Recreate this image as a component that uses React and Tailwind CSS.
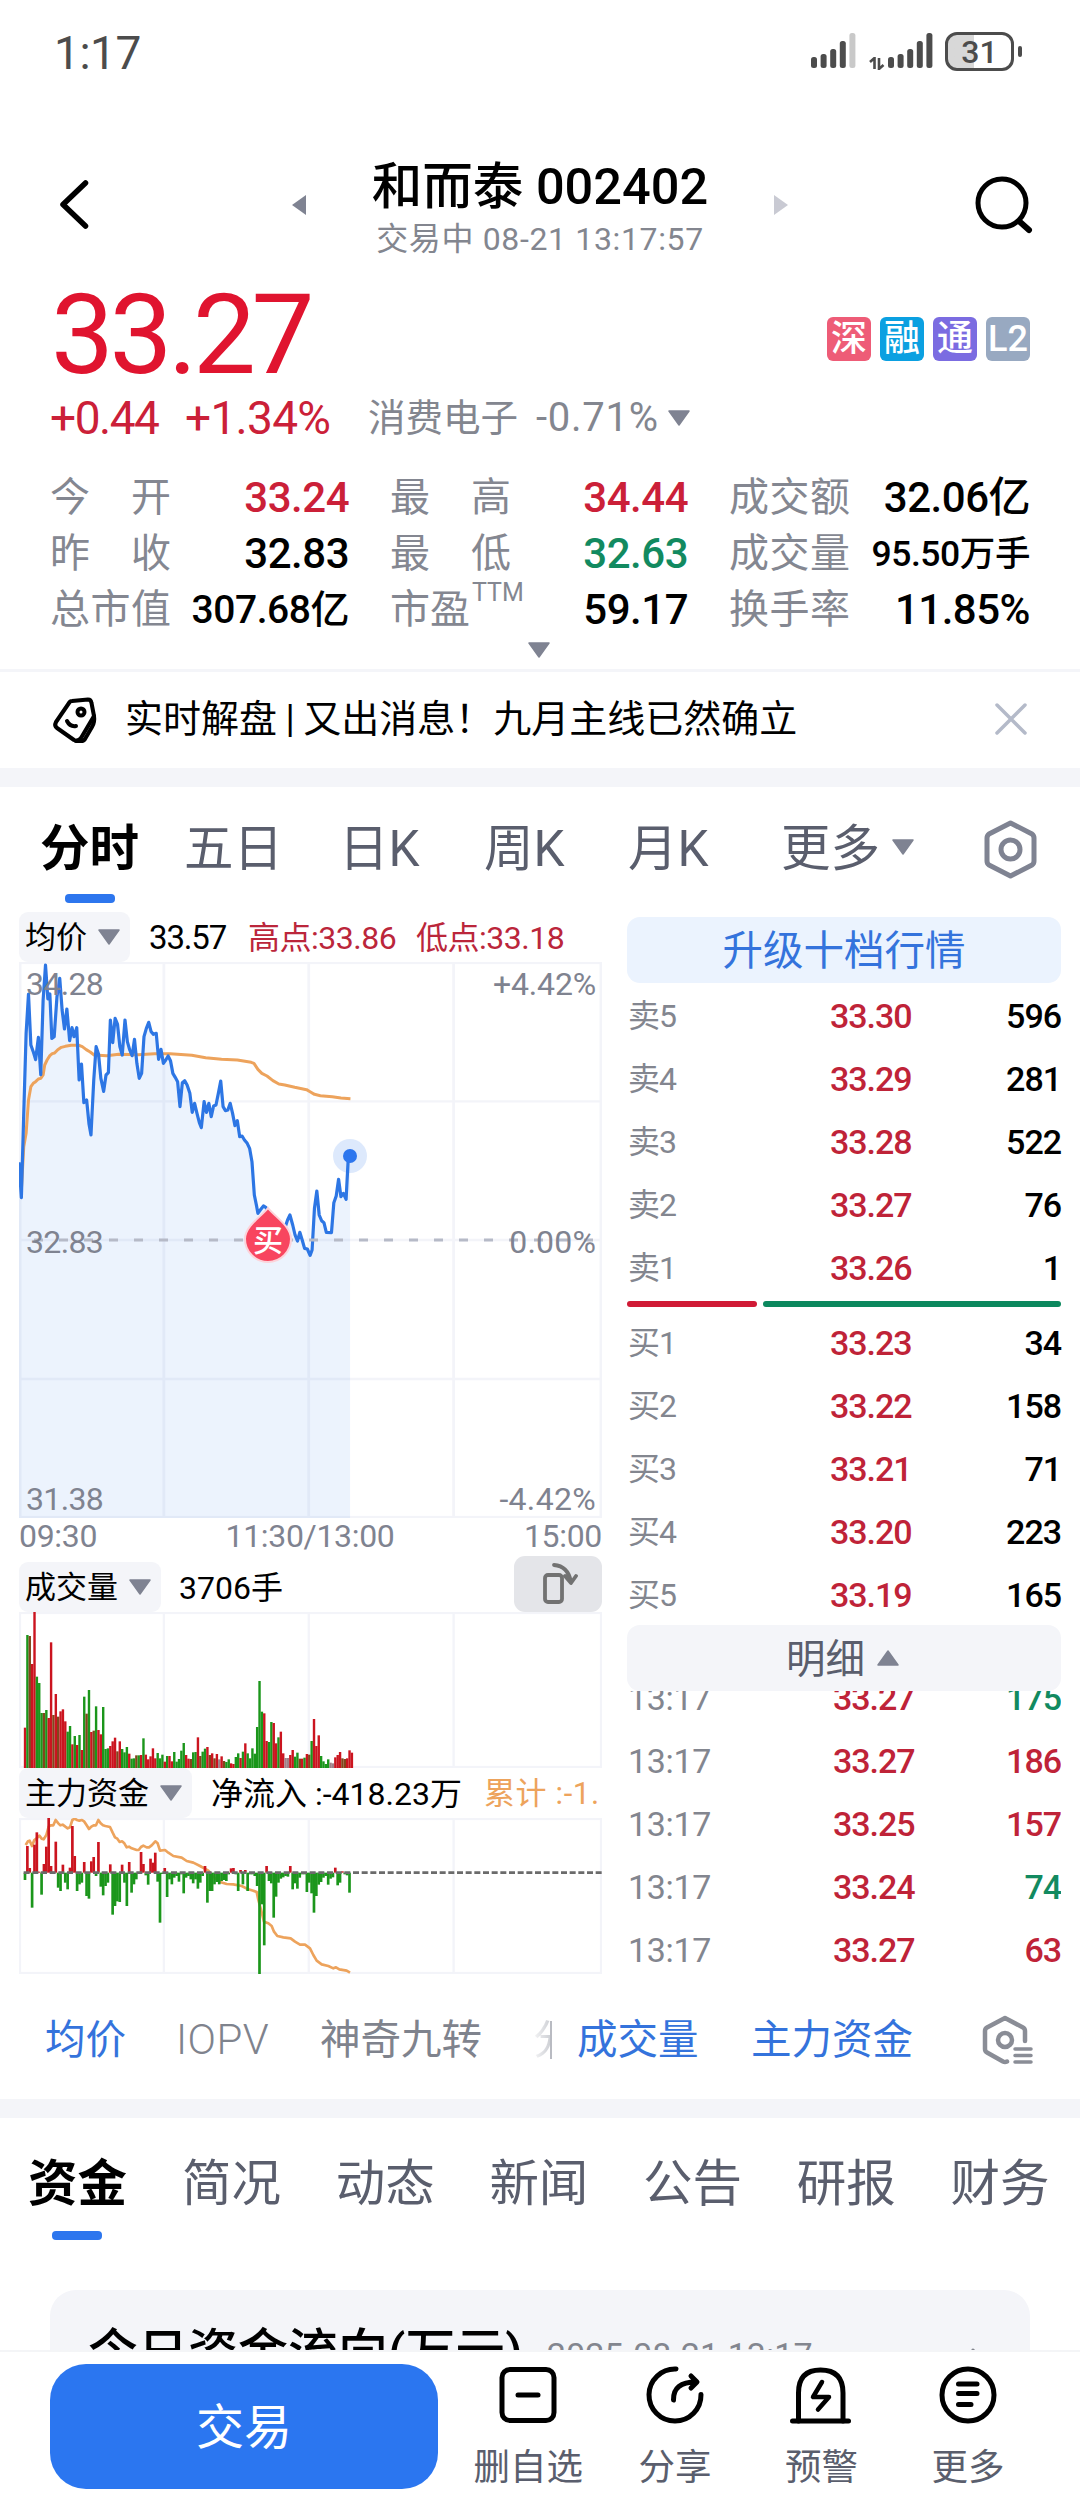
import clsx from 'clsx'

const PRICE_LINE =
  '48,787 54,893 60,640 66,400 72,282 78,435 84,455 90,479 97,412 103,524 109,300 115,195 121,297 126,282 131,415 137,410 144,290 151,235 157,330 163,387 169,327 176,422 182,383 187,410 194,383 200,540 206,492 212,608 219,600 225,672 230,705 237,540 243,440 249,462 255,535 262,574 268,525 274,518 279,360 285,428 291,355 297,372 303,440 309,465 316,360 322,425 328,450 334,467 340,418 346,490 352,535 358,520 364,410 370,385 376,367 382,395 388,403 395,400 401,478 407,448 413,490 419,480 425,468 431,482 437,520 443,532 449,545 455,620 461,548 467,542 473,555 480,580 486,637 492,610 498,640 504,668 509,683 516,605 522,637 528,610 534,650 540,618 546,615 552,580 558,543 564,620 570,632 576,630 582,610 588,640 594,677 600,662 606,710 612,708 618,720 625,730 631,745 637,785 643,885 649,920 652,940 658,930 666,918 672,922 680,940 700,990 720,985 727,960 733,945 740,975 746,1005 752,1023 758,997 764,1020 770,1045 777,1047 784,1066 789,1050 795,925 801,873 807,945 813,962 819,968 825,997 838,998 844,908 850,888 856,838 862,890 868,880 875,898 880,785 885,768'

const AVG_LINE =
  '54,870 60,740 66,700 72,600 78,560 84,550 90,545 97,537 103,535 109,525 113,495 119,480 126,467 132,461 138,459 146,449 155,442 165,439 180,436 200,436 208,440 218,449 228,456 238,465 270,467 300,463 350,464 390,461 430,461 485,466 520,473 560,478 600,480 635,487 642,490 652,508 662,520 675,528 690,542 705,552 720,555 745,562 775,569 785,576 795,583 810,587 840,590 862,594 886,596'

const FLOW_LINE =
  '77,735 84,724 89,722 96,738 103,720 110,715 118,707 125,716 131,718 139,705 146,680 152,676 160,676 167,660 175,670 181,676 188,674 196,680 203,685 210,682 217,660 224,656 231,660 238,662 246,660 253,665 260,676 267,687 274,680 281,676 288,676 295,660 302,670 309,676 316,678 330,681 338,698 345,712 352,716 359,726 366,724 373,730 380,742 387,740 395,745 410,750 416,750 423,741 430,737 440,742 447,742 455,736 466,724 473,730 480,752 495,750 505,758 520,768 545,773 560,783 580,788 600,798 625,812 640,830 660,846 680,852 700,853 725,858 745,868 760,872 770,876 775,900 782,925 792,965 805,970 815,978 822,995 832,1008 850,1012 872,1015 885,1025 900,1034 915,1034 930,1045 940,1065 950,1082 965,1093 985,1098 1000,1105 1008,1102 1018,1108 1040,1112 1050,1118'

// r = up, g = down, b = blended up/down, n = flat
const VOLUMES =
  'r121 g399 b396 r312 r468 g274 g255 g165 b165 g174 r150 r377 b159 r222 b154 r170 r176 r140 g109 g126 r71 g96 r69 g99 r54 g214 b163 g234 r108 b112 g185 r114 r101 g183 g57 g59 r66 r80 r91 b50 r80 g57 g47 g63 r43 g28 g29 b38 g38 r39 g89 r40 r26 r35 r59 r29 g45 g29 g40 r19 g36 r36 r20 g48 g19 g27 g52 g75 r39 r28 b27 g47 g48 r92 b36 g49 g58 r63 b39 r44 b29 r42 n26 r35 b21 g18 g26 r14 r12 g33 g44 r30 g49 r74 g44 g29 g59 g43 g123 g261 g169 r164 r81 g78 g138 r135 r74 g92 r109 r44 n30 n30 r39 r54 g34 g46 b28 r28 g31 r42 b40 g81 r147 r66 r98 g36 g20 g12 g26 n16 n14 r32 r39 r48 b29 b27 r29 r53 r46'.split(' ')

const FLOWS = [
  -22, 80, 14, -105, 84, 121, 3, -66, 26, 78, 164, 20, 3, 93, -45, -55, 24, -30, -50, 15, 140, 50, -55, -35, -30, 32,
  -70, -78, 34, 47, -10, 92, -42, -68, -40, -30, 25, -126, -100, -86, -88, 24, -30, -100, 32, -60, -35, -20, -3, 62,
  26, -8, -36, 42, 30, 60, -27, -150, -4, 14, -73, -20, -35, -15, -10, -27, -5, -62, -15, -10, -20, -32, -20, -48,
  -30, -10, 20, -90, -55, -55, -35, -28, -35, -25, -22, -25, -5, 13, 14, -5, -55, 8, -35, 8, -55, -5, -5, -10, -40,
  -304, -95, -218, 20, -25, -32, -135, -72, -30, -18, -14, -10, -12, 20, -50, -32, -48, -15, -5, -5, -58, -30, -62,
  -120, -70, -36, -28, -15, -10, -36, -18, -14, 15, -38, -30, 4, -5, -8, -60,
]

const BAR_STEP = 7.106
const BAR_COLORS = { r: '#cb141f', g: '#1b961b', b: '#82461c', n: '#a08088' }

const STATS = [
  { label: '今开', value: '33.24', tone: 'text-[#cb2038]' },
  { label: '最高', value: '34.44', tone: 'text-[#cb2038]' },
  { label: '成交额', value: '32.06亿' },
  { label: '昨收', value: '32.83' },
  { label: '最低', value: '32.63', tone: 'text-[#128a60]' },
  { label: '成交量', value: '95.50万手', size: 'text-[35.5px]' },
  { label: '总市值', value: '307.68亿', size: 'text-[39px]' },
  { label: '市盈', sup: 'TTM', value: '59.17' },
  { label: '换手率', value: '11.85%' },
]

const BADGES = [
  ['深', 'bg-[#ee5c77]'],
  ['融', 'bg-[#0ba0e1]'],
  ['通', 'bg-[#7b6ce1]'],
  ['L2', 'bg-[#98a9c1]'],
]

const ASKS = [
  ['卖5', '33.30', '596'],
  ['卖4', '33.29', '281'],
  ['卖3', '33.28', '522'],
  ['卖2', '33.27', '76'],
  ['卖1', '33.26', '1'],
]

const BIDS = [
  ['买1', '33.23', '34'],
  ['买2', '33.22', '158'],
  ['买3', '33.21', '71'],
  ['买4', '33.20', '223'],
  ['买5', '33.19', '165'],
]

const TICKS = [
  ['13:17', '33.27', '175', 'down'],
  ['13:17', '33.27', '186', 'up'],
  ['13:17', '33.25', '157', 'up'],
  ['13:17', '33.24', '74', 'down'],
  ['13:17', '33.27', '63', 'up'],
]

function Triangle({ className = '', dir = 'down', fill = '#7f8392' }) {
  const points = {
    down: '1,1 21,1 11,15',
    up: '1,15 21,15 11,1',
  }
  return (
    <svg className={clsx('shrink-0', className)} width="22" height="16" viewBox="0 0 22 16">
      <polygon points={points[dir]} fill={fill} stroke={fill} strokeWidth="1.5" strokeLinejoin="round" />
    </svg>
  )
}

function SignalBars({ faded }) {
  const heights = [11, 14, 19, 27, 35]
  return (
    <svg width="45" height="36" viewBox="0 0 45 36">
      {heights.map((h, i) => (
        <rect
          key={i}
          x={i * 9.6}
          y={36 - h}
          width="6"
          height={h}
          rx="2.5"
          fill={faded && i === 4 ? '#c9c9c9' : '#4c4c4c'}
        />
      ))}
    </svg>
  )
}

function StatusBar() {
  return (
    <div className="flex h-[104px] items-start justify-between pl-[54px] pr-[58px] text-[#4c4c4c]">
      <span className="mt-[28px] text-[46px] leading-[50px] tracking-[-0.01em]">1:17</span>
      <div className="mt-[32px] flex items-start">
        <SignalBars faded />
        <svg className="ml-[13px] mt-[25px]" width="16" height="13" viewBox="0 0 16 13">
          <path d="M1 5 L5.5 1 V12 M10 1 V12 L14.500 8" fill="none" stroke="#4c4c4c" strokeWidth="2.6" />
        </svg>
        <span className="ml-[3px]">
          <SignalBars />
        </span>
        <div className="ml-[12px] flex h-[39px] w-[69px] items-center justify-center rounded-[12px] border-[3px] border-[#4c4c4c] bg-linear-to-r from-[#d8d8d8] from-42% to-white to-42% text-[32px] font-medium leading-none">
          31
        </div>
        <div className="ml-[4px] mt-[14px] h-[11px] w-[4px] rounded-full bg-[#4c4c4c]" />
      </div>
    </div>
  )
}

function Header() {
  return (
    <header className="flex h-[164px] items-start pl-[56px] pr-[45px]">
      <svg className="mt-[72px]" width="36" height="56" viewBox="0 0 36 56">
        <path d="M29.500 7 L7 28.500 L29.500 50" fill="none" stroke="#000" strokeWidth="5.500" strokeLinecap="round" strokeLinejoin="round" />
      </svg>
      <div className="ml-[199px] flex items-start">
        <svg className="mt-[90px]" width="16" height="22" viewBox="0 0 16 22">
          <polygon points="15,1 15,21 1,11" fill="#7f8392" />
        </svg>
        <div className="mt-[51px] flex w-[466px] flex-col items-center">
          <h1 className="text-[50.5px] font-medium leading-[64px] text-black">和而泰 002402</h1>
          <p className="-mt-px text-[32px] leading-[42px] tracking-[0.02em] text-[#83868f]">交易中 08-21 13:17:57</p>
        </div>
        <svg className="mt-[90px]" width="16" height="22" viewBox="0 0 16 22">
          <polygon points="1,1 1,21 15,11" fill="#c9cad3" />
        </svg>
      </div>
      <svg className="ml-auto mt-[70px]" width="62" height="62" viewBox="0 0 62 62">
        <circle cx="29" cy="29" r="24" fill="none" stroke="#000" strokeWidth="5" />
        <path d="M46.500 47.500 L56 56" stroke="#000" strokeWidth="6" strokeLinecap="round" />
      </svg>
    </header>
  )
}

function StatCell({ label, sup, value, tone = 'text-black', size = 'text-[42px]' }) {
  return (
    <div className="flex h-[56px] items-center justify-between">
      <div className={clsx('flex text-[40px] leading-[56px] text-[#848791]', !sup && 'w-[121px] justify-between')}>
        {label.split('').map((ch) => (
          <span key={ch}>{ch}</span>
        ))}
        {sup && <sup className="top-0 -mt-[17px] pl-[2px] text-[25px] leading-[56px]">{sup}</sup>}
      </div>
      <span className={clsx('font-medium leading-[56px] tracking-[-0.012em] whitespace-nowrap', size, tone)}>{value}</span>
    </div>
  )
}

function Quote() {
  return (
    <section className="h-[401px] pl-[50px] pr-[50px]">
      <div className="flex items-center justify-between pt-[27px]">
        <span className="pl-px text-[112px] leading-[80px] tracking-[-0.04em] text-[#e0142f]">33.27</span>
        <div className="flex gap-[9px] pt-[8px]">
          {BADGES.map(([text, bg]) => (
            <span
              key={text}
              className={clsx('flex h-[44px] w-[44px] items-center justify-center rounded-[6px] text-[36px] font-medium leading-none text-white', bg)}
            >
              {text}
            </span>
          ))}
        </div>
      </div>
      <div className="mt-[23px] flex h-[40px] items-center leading-[40px]">
        <span className="w-[135px] text-[46px] tracking-[-0.032em] text-[#cb2038]">+0.44</span>
        <span className="w-[183px] text-[46px] tracking-[-0.015em] text-[#cb2038]">+1.34%</span>
        <span className="w-[168px] text-[37.5px] text-[#83868f]">消费电子</span>
        <span className="w-[132px] text-[40px] tracking-[0.018em] text-[#83868f]">-0.71%</span>
        <Triangle />
      </div>
      <div className="mt-[32px] grid grid-cols-[299px_298px_301px] gap-x-[41px]">
        {STATS.map((s) => (
          <StatCell key={s.label} {...s} />
        ))}
      </div>
      <div className="flex justify-center pr-[2px] pt-[4px]">
        <Triangle />
      </div>
    </section>
  )
}

function Notice() {
  return (
    <div className="flex h-[99px] items-center border-t-[3px] border-[#f4f5f9] pl-[50px] pr-[52px]">
      <svg width="50" height="50" viewBox="0 0 50 50" fill="none" stroke="#000" strokeWidth="4" strokeLinejoin="round" strokeLinecap="round">
        <path d="M22 6 L38 4.500 Q41 4.500 41.500 8 L44 21 L31 43 Q28 47 24 45 L7 33 Q4 31 6 27 L19 8 Q20 6 22 6 Z" />
        <path d="M44 21 Q45 27 42 32 L35 44 Q34 46 31 46 L26 46" />
        <circle cx="31" cy="17" r="3.500" />
        <path d="M17 26 Q20 32 26 31" />
      </svg>
      <p className="ml-[25px] flex-1 pb-[3px] text-[38px] leading-[50px] text-black">
        实时解盘<span className="px-[8.5px]">|</span>又出消息！九月主线已然确立
      </p>
      <svg className="mb-[2px]" width="34" height="34" viewBox="0 0 34 34">
        <path d="M3 3 L31 31 M31 3 L3 31" stroke="#b4bac9" strokeWidth="3.500" strokeLinecap="round" />
      </svg>
    </div>
  )
}

function PeriodTabs() {
  return (
    <nav className="grid h-[125px] grid-cols-[144px_155px_145px_144px_153px_202px_auto] items-start pl-[40px] text-[49.5px] leading-[60px] text-[#5a5e6d]">
      <div className="flex flex-col pt-[32px]">
        <span className="font-bold text-black">分时</span>
        <span className="ml-[25px] mt-[15px] h-[9px] w-[50px] rounded-[4px] bg-[#2d76ee]" />
      </div>
      <span className="pt-[32px]">五日</span>
      <span className="pt-[32px]">日K</span>
      <span className="pt-[32px]">周K</span>
      <span className="pt-[32px]">月K</span>
      <span className="flex items-center gap-[12px] pt-[32px]">
        更多
        <Triangle className="mb-[4px]" />
      </span>
      <svg className="mt-[32px]" width="56" height="62" viewBox="0 0 56 62" fill="none" stroke="#7f8392" strokeWidth="5" strokeLinejoin="round">
        <path d="M27.500 4 L49 15 Q51 16.500 51 19 V42 Q51 44.500 49 46 L27.500 57 L6 46 Q4 44.500 4 42 V19 Q4 16.500 6 15 Z" />
        <circle cx="27.500" cy="30.500" r="9.500" />
      </svg>
    </nav>
  )
}

function PickerPill({ children }) {
  return (
    <span className="flex h-[50px] shrink-0 items-center gap-[11px] rounded-[9px] bg-[#f4f5f9] pl-[6px] pr-[10px] pt-[2px] text-[31px] tracking-normal text-black">
      {children}
      <Triangle className="mb-[3px]" />
    </span>
  )
}

function Grid({ x, y, width, height, rows = [], stroke }) {
  return (
    <g stroke="#f3f4f9" fill="none" strokeWidth={stroke}>
      <rect x={x} y={y} width={width} height={height} strokeWidth={stroke * 1.8} />
      {[1, 2, 3].map((i) => (
        <line key={i} x1={x + width * i * 0.2485} x2={x + width * i * 0.2485} y1={y} y2={y + height} />
      ))}
      {rows.map((r) => (
        <line key={r} x1={x} x2={x + width} y1={r} y2={r} />
      ))}
    </g>
  )
}

function PriceChart() {
  return (
    <div className="relative h-[556px] w-[583px]">
      <svg className="block" width="583" height="556" viewBox="48 186 1474 1668" preserveAspectRatio="none">
        <Grid x={48} y={186} width={1474} height={1668} rows={[604, 1020, 1437]} stroke={7} />
        <polygon points={`${PRICE_LINE} 885,1854 48,1854`} fill="#2d76ee" fillOpacity="0.09" />
        <polyline points={AVG_LINE} fill="none" stroke="#eda35c" strokeWidth="3" strokeLinejoin="round" vectorEffect="non-scaling-stroke" />
        <polyline points={PRICE_LINE} fill="none" stroke="#2d76e4" strokeWidth="3.2" strokeLinejoin="round" vectorEffect="non-scaling-stroke" />
      </svg>
      <svg className="absolute inset-0" width="583" height="556" viewBox="0 0 583 556">
        <line x1="0" x2="583" y1="278" y2="278" stroke="#b6bac7" strokeWidth="3" strokeDasharray="9 16" strokeDashoffset="-15" />
        <circle cx="331" cy="194" r="17" fill="#2d76ee" fillOpacity="0.16" />
        <circle cx="331" cy="194" r="7" fill="#2d76ee" />
        <path
          d="M249 246 C255 254 272 264 272 277 A23 23 0 0 1 226 277 C226 264 243 254 249 246 Z"
          fill="#f8455f"
          stroke="#fcd3da"
          strokeWidth="2"
        />
      </svg>
      <div className="absolute inset-0 flex flex-col justify-between pb-[1px] pl-[7px] pr-[6px] pt-[4px] text-[32px] leading-[36px] tracking-[-0.02em] text-[#7f8390]">
        <div className="flex justify-between">
          <span>34.28</span>
          <span className="tracking-[-0.005em]">+4.42%</span>
        </div>
        <div className="flex justify-between">
          <span>32.83</span>
          <span className="tracking-[0.005em]">0.00%</span>
        </div>
        <div className="flex justify-between">
          <span>31.38</span>
          <span className="tracking-[0.01em]">-4.42%</span>
        </div>
      </div>
      <span className="absolute left-[234px] top-[264px] text-[30px] font-medium leading-[30px] text-white">买</span>
    </div>
  )
}

function VolumeChart() {
  return (
    <svg className="block" width="583" height="156" viewBox="57 36 1749 468">
      <Grid x={57} y={36} width={1749} height={468} stroke={7} />
      {VOLUMES.map((v, i) => {
        const h = Number(v.slice(1))
        return <rect key={i} x={71.5 + i * BAR_STEP} y={504 - h} width={7.2} height={h} fill={BAR_COLORS[v[0]]} />
      })}
    </svg>
  )
}

function FlowChart() {
  return (
    <svg className="block" width="583" height="156" viewBox="57 654 1749 468">
      <Grid x={57} y={654} width={1749} height={468} stroke={7} />
      <polyline points={FLOW_LINE} fill="none" stroke="#eda35c" strokeWidth="8" strokeLinejoin="round" />
      {FLOWS.map((v, i) => (
        <rect
          key={i}
          x={71 + i * BAR_STEP}
          y={v > 0 ? 818 - v : 818}
          width={8}
          height={Math.abs(v)}
          fill={v > 0 ? '#cb141f' : '#1b961b'}
        />
      ))}
      <line x1="71" x2="1806" y1="818" y2="818" stroke="#6b6b6b" strokeWidth="8" strokeDasharray="18 8" />
    </svg>
  )
}

function ChartColumn() {
  return (
    <div className="w-[583px]">
      <div className="flex h-[50px] items-center whitespace-nowrap text-[33px] leading-[48px]">
        <PickerPill>均价</PickerPill>
        <span className="ml-[19px] w-[99px] pt-[2px] tracking-[-0.035em] text-black">33.57</span>
        <span className="w-[168px] pt-[2px] text-[32px] tracking-[-0.015em] text-[#bb263b]">高点:33.86</span>
        <span className="pt-[2px] text-[32px] tracking-[-0.015em] text-[#bb263b]">低点:33.18</span>
      </div>
      <PriceChart />
      <div className="flex h-[38px] justify-between text-[32px] leading-[37px] tracking-[-0.01em] text-[#7f8390]">
        <span>09:30</span>
        <span className="-ml-[1px]">11:30/13:00</span>
        <span>15:00</span>
      </div>
      <div className="flex h-[56px] items-end">
        <PickerPill>成交量</PickerPill>
        <span className="ml-[18px] flex-1 pt-[2px] text-[32px] leading-[48px] text-black">3706手</span>
        <span className="flex h-[56px] w-[88px] items-center justify-center rounded-[11px] bg-[#e4e5e9]">
          <svg width="40" height="44" viewBox="0 0 40 44" fill="none" stroke="#727272" strokeWidth="3.800" strokeLinecap="round" strokeLinejoin="round">
            <rect x="7" y="13" width="17" height="27" rx="3" />
            <path d="M16 3 Q30 4 33 20 M27 14 L33 21 L38 14" />
          </svg>
        </span>
      </div>
      <VolumeChart />
      <div className="flex h-[50px] items-center overflow-hidden whitespace-nowrap text-[31px]">
        <PickerPill>主力资金</PickerPill>
        <span className="ml-[19px] w-[273px] shrink-0 pt-[2px] text-[32px] text-black">净流入 :-418.23万</span>
        <span className="pt-[2px] tracking-[0.02em] text-[#eda35c]">累计 :-1.</span>
      </div>
      <FlowChart />
    </div>
  )
}

function BookRow({ label, price, qty }) {
  return (
    <div className="flex h-[63px] shrink-0 items-center pt-[3px] text-[34px] leading-[60px] tracking-[-0.03em]">
      <span className="w-[203px] pl-[1px] text-[32px] text-[#83868f]">{label}</span>
      <span className="font-medium text-[#bf2338]">{price}</span>
      <span className="flex-1 text-right font-medium text-black">{qty}</span>
    </div>
  )
}

function OrderBook() {
  return (
    <div className="flex w-[434px] flex-col pt-[5px]">
      <button className="h-[66px] shrink-0 rounded-[13px] bg-[#ebf3fe] pt-[2px] text-[40.5px] leading-[60px] text-[#3473dc]">
        升级十档行情
      </button>
      {ASKS.map(([label, price, qty]) => (
        <BookRow key={label} label={label} price={price} qty={qty} />
      ))}
      <div className="my-[3px] flex h-[6px] shrink-0 gap-[6px]">
        <div className="w-[130px] rounded-full bg-[#d01a35]" />
        <div className="flex-1 rounded-full bg-[#0c885e]" />
      </div>
      {BIDS.map(([label, price, qty]) => (
        <BookRow key={label} label={label} price={price} qty={qty} />
      ))}
      <button className="flex h-[66px] shrink-0 items-center justify-center gap-[12px] rounded-[13px] bg-[#f4f5f9] pr-[3px] pt-[3px] text-[39.5px] leading-[60px] text-[#5a5e6d]">
        明细
        <Triangle dir="up" className="mb-[3px]" />
      </button>
      <div className="h-[283px] shrink-0 overflow-hidden">
        <div className="-mt-[26px]">
          {TICKS.map(([time, price, qty, side], i) => (
            <div key={i} className="flex h-[63px] items-center pt-[3px] text-[34px] leading-[60px] tracking-[-0.03em]">
              <span className="w-[206px] pl-[1px] tracking-[-0.01em] text-[#83868f]">{time}</span>
              <span className="font-medium text-[#bf2338]">{price}</span>
              <span className={clsx('flex-1 text-right font-medium', side === 'up' ? 'text-[#bf2338]' : 'text-[#128a60]')}>{qty}</span>
            </div>
          ))}
        </div>
      </div>
    </div>
  )
}

function IndicatorBar() {
  return (
    <div className="flex h-[125px] items-center whitespace-nowrap pl-[45px] pt-[7px] text-[40.5px] leading-[60px] text-[#7f838d]">
      <span className="w-[131px] text-[#3473dc]">均价</span>
      <span className="w-[144px] text-[42px] font-light tracking-[0.01em]">IOPV</span>
      <span className="w-[213px]">神奇九转</span>
      <span className="w-[17px] overflow-hidden bg-linear-to-r from-[#f6f6f7] to-[#cfd1d6] bg-clip-text text-transparent">分</span>
      <span className="h-[38px] w-[2px] bg-[#b9bbc2]" />
      <span className="ml-[25px] w-[174px] text-[#3473dc]">成交量</span>
      <span className="w-[231px] text-[#3473dc]">主力资金</span>
      <svg width="52" height="50" viewBox="0 0 52 50" fill="none" stroke="#8a8d96" strokeWidth="4.500" strokeLinecap="round" strokeLinejoin="round">
        <path d="M43 26 V16 Q43 13.500 41 12.500 L23 3 L5 12.500 Q3 13.500 3 16 V34 Q3 36.500 5 37.500 L21 46.500 Q23 47.500 25 46.500" />
        <circle cx="23" cy="25" r="7" />
        <path d="M33 34 H49 M33 40.500 H49 M33 47 H49" strokeWidth="3.500" />
      </svg>
    </div>
  )
}

function SectionTabs() {
  const tabs = ['简况', '动态', '新闻', '公告', '研报', '财务']
  return (
    <nav className="flex h-[172px] items-start pl-[28px] text-[49.5px] leading-[60px] text-[#5a5e6d]">
      <div className="flex w-[154px] shrink-0 flex-col pt-[36px]">
        <span className="font-bold text-black">资金</span>
        <span className="ml-[24px] mt-[17px] h-[9px] w-[50px] rounded-[4px] bg-[#2d76ee]" />
      </div>
      {tabs.map((t) => (
        <span key={t} className="w-[153.700px] shrink-0 pt-[36px]">
          {t}
        </span>
      ))}
    </nav>
  )
}

function FundCard() {
  return (
    <section className="h-[60px] overflow-hidden px-[50px]">
      <div className="flex h-[300px] items-start rounded-[26px] bg-[#f4f5f9] pl-[38px] pr-[46px] pt-[33px]">
        <h2 className="text-[50px] font-medium leading-[60px] text-black">今日资金流向(万元)</h2>
        <span className="ml-[24px] flex-1 pt-[9px] text-[34px] leading-[46px] tracking-[0.002em] text-[#83868f]">2025-08-21 13:17</span>
        <svg className="mt-[25px]" width="14" height="26" viewBox="0 0 14 26">
          <path d="M3 2 L12 13 L3 24" fill="none" stroke="#83868f" strokeWidth="3" strokeLinecap="round" />
        </svg>
      </div>
    </section>
  )
}

function ActionItem({ label, children }) {
  return (
    <div className="flex w-[146.600px] flex-col items-center">
      <svg width="64" height="60" viewBox="0 0 64 60" fill="none" stroke="#000" strokeWidth="5" strokeLinecap="round" strokeLinejoin="round">
        {children}
      </svg>
      <span className="mt-[18px] text-[36.5px] leading-[50px] text-[#5a5e6d]">{label}</span>
    </div>
  )
}

function BottomBar() {
  return (
    <footer className="flex h-[154px] items-start border-t-2 border-[#f4f5f7] bg-white pl-[50px]">
      <button className="mt-[12px] h-[125px] w-[388px] rounded-[36px] bg-[#2b76f0] pt-[3px] text-[48px] leading-[120px] text-white">交易</button>
      <div className="ml-[17px] flex pt-[13px]">
        <ActionItem label="删自选">
          <rect x="6" y="4.500" width="52" height="51" rx="8" />
          <path d="M22 30 H42" />
        </ActionItem>
        <ActionItem label="分享">
          <path d="M33 4 A26 26 0 1 0 58 29.500" />
          <path d="M30.500 35 Q30 17 53 17 M48 11 L54 17 L48 23" />
        </ActionItem>
        <ActionItem label="预警">
          <path d="M3.500 56 H59.500" />
          <path d="M9.500 56 V28 Q9.500 5 31.500 5 Q54 5 54 28 V56" />
          <path d="M33 17 L24 32 H40 L29 44.500" strokeWidth="4.500" />
        </ActionItem>
        <ActionItem label="更多">
          <circle cx="32" cy="30" r="26" />
          <path d="M22.500 19 H41 M22.500 28.500 H41 M22.500 39.500 H35" />
        </ActionItem>
      </div>
    </footer>
  )
}

export default function App() {
  return (
    <div className="h-[2504px] w-[1080px] overflow-hidden bg-white font-['Roboto','Noto_Sans_CJK_SC',sans-serif]">
      <StatusBar />
      <Header />
      <Quote />
      <Notice />
      <div className="h-[19px] bg-[#f4f5f9]" />
      <PeriodTabs />
      <main className="flex h-[1062px] justify-between pl-[19px] pr-[19px]">
        <ChartColumn />
        <OrderBook />
      </main>
      <IndicatorBar />
      <div className="h-[19px] bg-[#f4f5f9]" />
      <SectionTabs />
      <FundCard />
      <BottomBar />
    </div>
  )
}
